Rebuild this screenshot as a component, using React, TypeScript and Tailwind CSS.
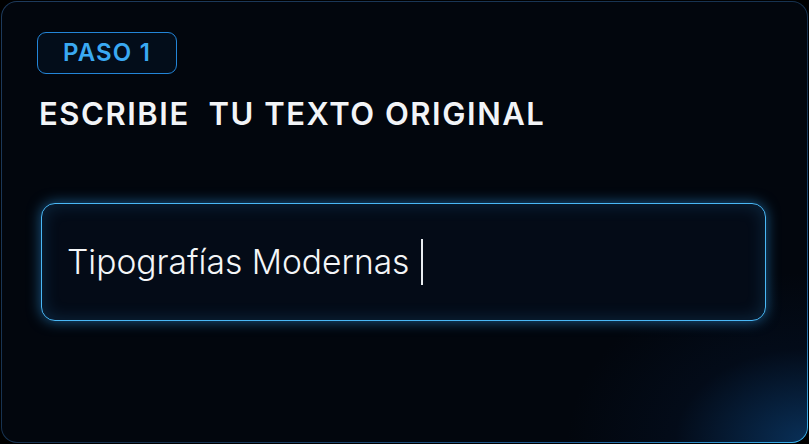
export default function App() {
  return (
    <div className="w-[809px] h-[444px] bg-black p-px" style={{ fontFamily: 'Inter, "Noto Sans", sans-serif' }}>
      {/* borde con degradado */}
      <div className="h-full w-full rounded-2xl p-px bg-[linear-gradient(150deg,#1d3a5c_0%,#15304d_60%,#1e5f99_85%,#3ab4f2_100%)]">
        <div className="relative h-full w-full overflow-hidden rounded-[15px] bg-[#02060d]">
          {/* brillo inferior derecho */}
          <div className="pointer-events-none absolute inset-0 bg-[radial-gradient(ellipse_240px_170px_at_100%_100%,rgba(20,110,200,0.4),rgba(10,50,110,0.12)_55%,transparent_100%)]" />

          <div className="relative flex flex-col px-[35px] pt-[30px]">
            {/* Paso */}
            <div className="flex">
              <div className="flex h-[42px] w-[140px] items-center justify-center rounded-[9px] border border-[#2385d8] bg-[#030d1a]">
                <span className="text-[24px] font-semibold tracking-[0.05em] text-[#3aa9f2]">PASO 1</span>
              </div>
            </div>

            {/* Título */}
            <h1 className="mt-[20px] ml-[2px] text-[31px] font-semibold leading-[40px] tracking-[0.05em] whitespace-pre text-[#f2f4f7]">
              ESCRIBIE  TU TEXTO ORIGINAL
            </h1>

            {/* Campo de texto */}
            <div className="mt-[69px] ml-[4px] mr-[6px] flex h-[118px] items-center rounded-[14px] border-[1.5px] border-[#4ab8f6] bg-[#040b17] px-[25px] shadow-[0_0_14px_rgba(50,160,240,0.55),inset_0_0_18px_rgba(50,160,240,0.2)]">
              <span className="text-[33.6px] font-light text-[#f4f6f8]">Tipografías Modernas</span>
              <span className="ml-[12px] h-[46px] w-[2px] bg-[#e8ecf0]" />
            </div>
          </div>
        </div>
      </div>
    </div>
  )
}
